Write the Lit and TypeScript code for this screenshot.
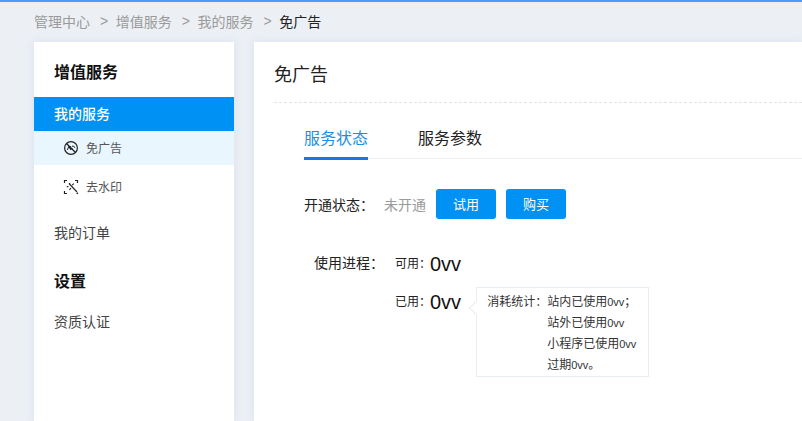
import { LitElement, html, css, svg } from "lit";
import { customElement } from "lit/decorators.js";

@customElement("app-root")
export class AppRoot extends LitElement {
  static styles = css`
    :host { display: block; width: 802px; height: 421px; overflow: hidden; background: #ecf0f5;
      font-family: "Noto Sans CJK SC", "Liberation Sans", sans-serif; color: #222; }
    .top { height: 2px; background: #4a9dfb; }
    .crumbs { display: flex; align-items: center; height: 40px; padding-left: 34px; padding-bottom: 2px; box-sizing: border-box; font-size: 14px; color: #9a9a9a; }
    .crumbs .sep { margin: 0 7.6px 0 10px; font-family: "Liberation Sans", sans-serif; }
    .crumbs .cur { color: #222; }
    .main { display: flex; gap: 20px; padding-left: 34px; }
    .side { width: 200px; height: 379px; background: #fff; flex: none; box-shadow: 0 0 8px rgba(190,205,230,.45); }
    .side h3 { margin: 0; padding-left: 20px; font-size: 16px; font-weight: 700; color: #111; line-height: 24px; }
    .h1 { padding-top: 17px; height: 55px; box-sizing: border-box; }
    .item { display: block; padding-left: 20px; font-size: 14px; line-height: 32px; height: 34px; color: #444; }
    .item.on { background: #0091f5; color: #fff; font-weight: 500; }
    .sub { display: flex; align-items: center; height: 34px; padding-left: 29px; gap: 7px; font-size: 12px; color: #555; }
    .sub span { margin-top: -2px; }
    .sub.on { background: #e9f6fe; }
    .sub svg { width: 16px; height: 16px; flex: none; }
    .gap1 { margin-top: 5px; }
    .orders { margin-top: 12px; }
    .side h3.h2 { margin-top: 18px; padding-bottom: 13px; }
    .content { flex: 1; background: #fff; height: 379px; padding-left: 20px; box-shadow: 0 0 8px rgba(190,205,230,.45); }
    .title { height: 61px; box-sizing: border-box; padding-top: 18px; font-size: 18px; line-height: 26px; color: #222; border-bottom: 1px dashed #e4e4e4; }
    .tabs { display: flex; gap: 50px; margin-top: 16px; margin-left: 30px; border-bottom: 1px solid #eef0f3; height: 40px; box-sizing: border-box; }
    .tab { font-size: 16px; line-height: 37px; height: 41px; box-sizing: border-box; color: #222; }
    .tab.on { color: #1a8fe6; border-bottom: 3px solid #0f7de0; }
    .status { display: flex; align-items: center; margin-top: 30px; padding-left: 30px; font-size: 14px; height: 30px; }
    .status .gray { color: #9a9a9a; margin-left: 10px; margin-right: 10px; }
    .btn { width: 60px; height: 30px; border-radius: 3px; background: #0091f5; color: #fff; font-size: 13px; line-height: 30px; text-align: center; margin-right: 10px; }
    .usage { display: grid; grid-template-columns: 81px 36px auto 1fr; row-gap: 8px; margin-top: 29px; padding-left: 40px; align-items: start; }
    .lab { font-size: 14px; line-height: 28px; white-space: nowrap; }
    .k { font-size: 12px; line-height: 30px; }
    .v { font-family: "Liberation Sans", sans-serif; font-size: 20px; line-height: 32px; margin: 0 0 -2px -1px; color: #111; }
    .tip { position: relative; margin-left: 15px; margin-top: 1px; width: 173px; height: 90px; box-sizing: border-box; border: 1px solid #e8edf3; background: #fff; padding: 2px 0 0 10px;
      display: grid; grid-template-columns: 60px 1fr; font-size: 12px; line-height: 21px; color: #333; }
    .tip::before { content: ""; position: absolute; left: -6px; top: 15px; width: 10px; height: 10px; background: #fff; border-left: 1px solid #e8edf3; border-bottom: 1px solid #e8edf3; box-sizing: border-box; transform: rotate(45deg); }
    .tip .l, .tip .line { white-space: nowrap; height: 21px; }
    .num { font-family: "Liberation Sans", sans-serif; font-size: 11px; line-height: 1; }
  `;

  render() {
    const noAd = svg`<svg viewBox="0 0 16 16" fill="none" stroke="#222" stroke-width="1.2"><circle cx="8" cy="8" r="6.4"/><path d="M3.5 3.5l9 9"/><path stroke-width="1" d="M4.4 10l1.5-4 1.2 3M7.6 6v4M9 6.2h1.2a1.8 1.8 0 0 1 1.6 1.6M9 8v2"/></svg>`;
    const wm = svg`<svg viewBox="0 0 16 16" fill="none" stroke="#222" stroke-width="1.2"><path d="M1.5 4v-2.5h2.5M12 1.5h2.5V4M1.5 12v2.5h2.5M14.5 13.5v1h-1"/><path stroke-width="1.1" d="M6 4.5l8 8.5M10.8 4.6L9.2 6.2M6.4 10.8l1.6-1.6M3.8 7.6h1.6M6.5 4.5l.6 .6"/></svg>`;
    return html`
      <div class="top"></div>
      <div class="crumbs">
        <span>管理中心</span><span class="sep">&gt;</span><span>增值服务</span><span class="sep">&gt;</span><span>我的服务</span><span class="sep">&gt;</span><span class="cur">免广告</span>
      </div>
      <div class="main">
        <aside class="side">
          <h3 class="h1">增值服务</h3>
          <div class="item on">我的服务</div>
          <div class="sub on">${noAd}<span>免广告</span></div>
          <div class="sub gap1">${wm}<span>去水印</span></div>
          <div class="item orders">我的订单</div>
          <h3 class="h2">设置</h3>
          <div class="item">资质认证</div>
        </aside>
        <section class="content">
          <div class="title">免广告</div>
          <div class="tabs"><div class="tab on">服务状态</div><div class="tab">服务参数</div></div>
          <div class="status"><span>开通状态：</span><span class="gray">未开通</span><div class="btn">试用</div><div class="btn">购买</div></div>
          <div class="usage">
            <div class="lab">使用进程：</div><div class="k">可用：</div><div class="v">0vv</div><div></div>
            <div></div><div class="k">已用：</div><div class="v">0vv</div>
            <div class="tip">
              <div class="l">消耗统计：</div>
              <div>
                <div class="line">站内已使用<span class="num">0vv</span>；</div>
                <div class="line">站外已使用<span class="num">0vv</span></div>
                <div class="line">小程序已使用<span class="num">0vv</span></div>
                <div class="line">过期<span class="num">0vv</span>。</div>
              </div>
            </div>
          </div>
        </section>
      </div>
    `;
  }
}
